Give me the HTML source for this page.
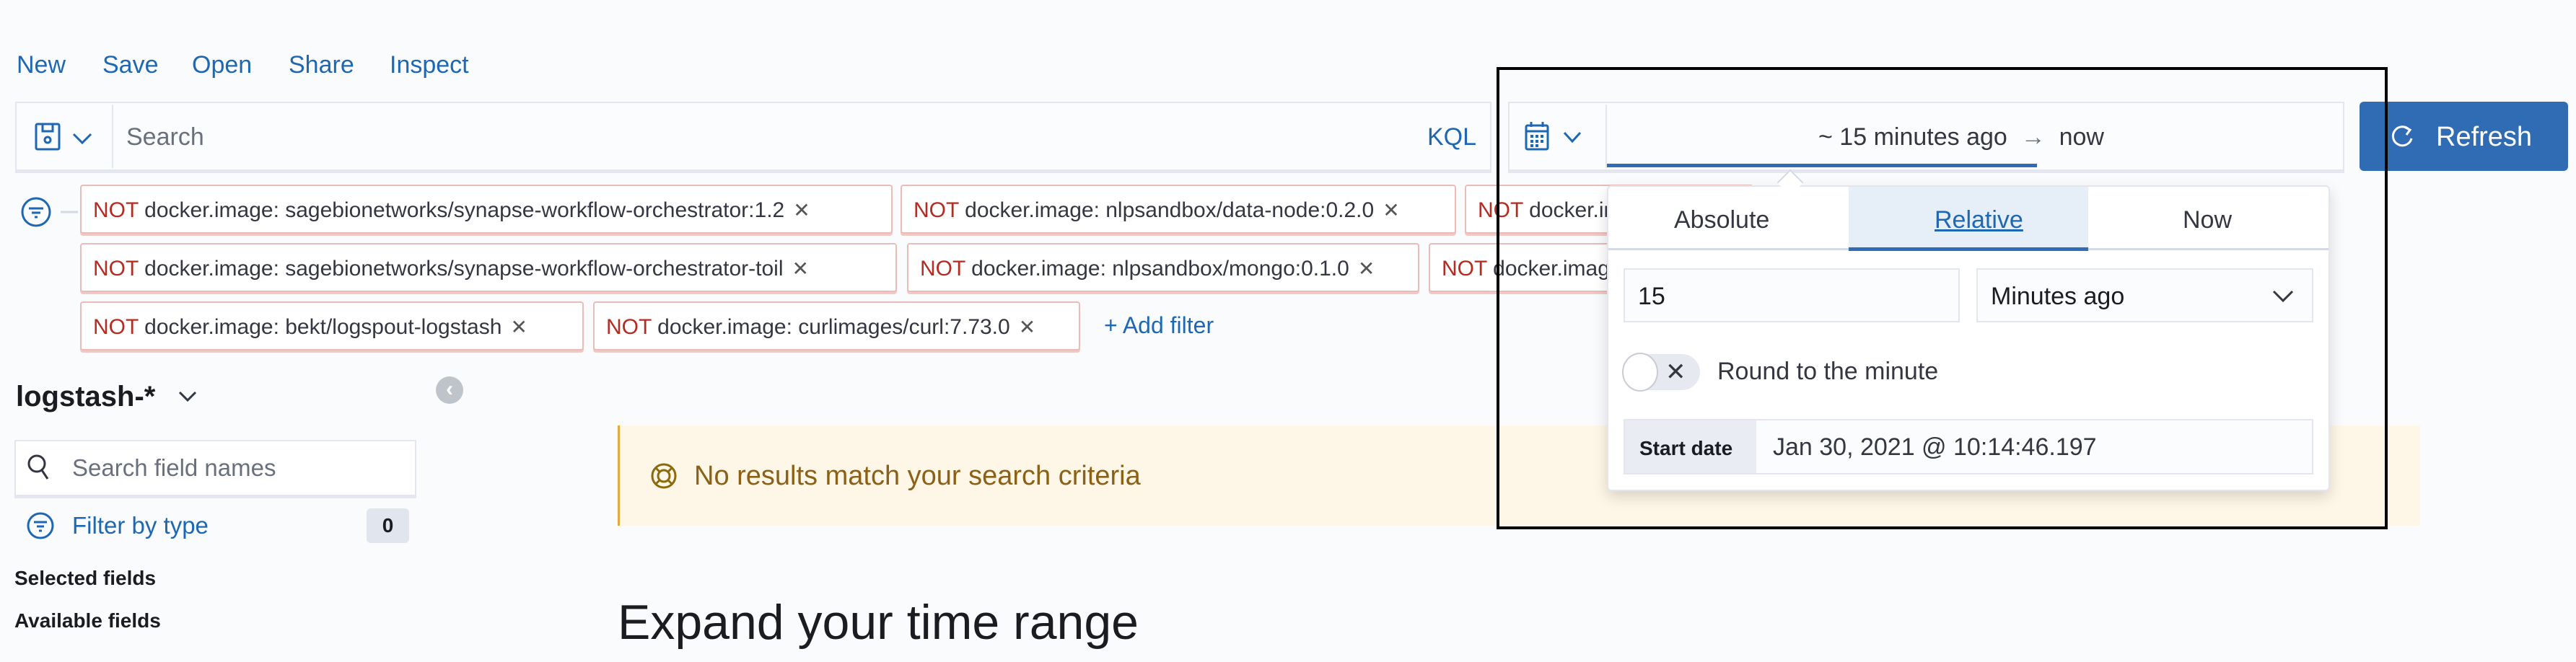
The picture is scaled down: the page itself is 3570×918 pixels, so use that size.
<!DOCTYPE html>
<html><head><meta charset="utf-8"><style>
*{box-sizing:border-box;margin:0;padding:0}
body{width:3570px;height:918px;background:#fafbfd;font-family:"Liberation Sans",Arial,sans-serif;position:relative;overflow:hidden;color:#343741}
.a{position:absolute}
.menu{top:71px;font-size:34px;color:#1e67b3}
.box{background:#fbfcfd;border:2px solid #e3e6ee;box-shadow:0 3px 0 #e4e7ef}
.pill{position:absolute;height:68px;border:2px solid #ebbcb7;background:#fff;border-radius:4px;font-size:30px;line-height:68px;padding-left:16px;color:#343741;white-space:nowrap;overflow:hidden;box-shadow:0 3px 0 #eec9c5}
.pill b{font-weight:normal;color:#b52b20}
.pill i{font-style:normal;color:#555;margin-left:12px;font-size:28px}
</style></head><body>
<div class="a menu" style="left:23px">New</div>
<div class="a menu" style="left:142px">Save</div>
<div class="a menu" style="left:266px">Open</div>
<div class="a menu" style="left:400px">Share</div>
<div class="a menu" style="left:540px">Inspect</div>

<div class="a box" style="left:21px;top:141px;width:2046px;height:96px"></div>
<div class="a" style="left:155px;top:145px;width:2px;height:88px;background:#e3e6ee"></div>
<svg class="a" style="left:48px;top:170px" width="90" height="40" viewBox="0 0 90 40"><rect x="2" y="2" width="32" height="35" rx="2" fill="none" stroke="#1e67b3" stroke-width="3"/><rect x="11" y="2" width="14" height="10" fill="none" stroke="#1e67b3" stroke-width="3"/><circle cx="18" cy="24" r="4" fill="none" stroke="#1e67b3" stroke-width="3"/><path d="M54 16 L66 28 L78 16" fill="none" stroke="#1e67b3" stroke-width="3"/></svg>
<div class="a" style="left:175px;top:171px;font-size:34px;color:#69707d">Search</div>
<div class="a" style="left:1978px;top:171px;font-size:34px;color:#1e67b3">KQL</div>

<div class="a box" style="left:2090px;top:141px;width:1159px;height:96px"></div>
<div class="a" style="left:2225px;top:145px;width:2px;height:88px;background:#e3e6ee"></div>
<svg class="a" style="left:2112px;top:168px" width="90" height="42" viewBox="0 0 90 42"><rect x="3" y="6" width="30" height="33" rx="2" fill="none" stroke="#1e67b3" stroke-width="3"/><line x1="3" y1="14" x2="33" y2="14" stroke="#1e67b3" stroke-width="3"/><line x1="10" y1="1" x2="10" y2="8" stroke="#1e67b3" stroke-width="3"/><line x1="26" y1="1" x2="26" y2="8" stroke="#1e67b3" stroke-width="3"/><g fill="#1e67b3"><rect x="9" y="19" width="4" height="4"/><rect x="16" y="19" width="4" height="4"/><rect x="23" y="19" width="4" height="4"/><rect x="9" y="26" width="4" height="4"/><rect x="16" y="26" width="4" height="4"/><rect x="23" y="26" width="4" height="4"/><rect x="9" y="32" width="4" height="4"/><rect x="16" y="32" width="4" height="4"/></g><path d="M56 16 L67 28 L78 16" fill="none" stroke="#1e67b3" stroke-width="3"/></svg>
<div class="a" style="left:2520px;top:171px;font-size:34px;color:#343741">~ 15 minutes ago &nbsp;<span style="color:#69707d">→</span>&nbsp; now</div>
<div class="a" style="left:2227px;top:227px;width:596px;height:5px;background:#2f6cb3"></div>

<div class="a" style="left:3270px;top:141px;width:289px;height:96px;background:#2f6cb3;border-radius:6px;color:#fff;font-size:38px;line-height:98px;padding-left:106px">Refresh</div>
<svg class="a" style="left:3312px;top:172px" width="34" height="36" viewBox="0 0 34 36"><path d="M27 8 A13 13 0 1 0 30 20" fill="none" stroke="#fff" stroke-width="3"/><path d="M20 4 L28 8 L23 15" fill="none" stroke="#fff" stroke-width="3"/></svg>

<svg class="a" style="left:28px;top:272px" width="80" height="44" viewBox="0 0 80 44"><circle cx="22" cy="22" r="19" fill="none" stroke="#1e67b3" stroke-width="3"/><line x1="12" y1="17" x2="32" y2="17" stroke="#1e67b3" stroke-width="3"/><line x1="16" y1="23" x2="28" y2="23" stroke="#1e67b3" stroke-width="3"/><line x1="20" y1="29" x2="24" y2="29" stroke="#1e67b3" stroke-width="3"/><line x1="56" y1="22" x2="80" y2="22" stroke="#d3dae6" stroke-width="3"/></svg>

<div class="pill" style="left:111px;top:256px;width:1126px">
<b>NOT</b> docker.image: sagebionetworks/synapse-workflow-orchestrator:1.2<i>✕</i></div>
<div class="pill" style="left:1248px;top:256px;width:770px"><b>NOT</b> docker.image: nlpsandbox/data-node:0.2.0<i>✕</i></div>
<div class="pill" style="left:2030px;top:256px;width:400px"><b>NOT</b> docker.image</div>
<div class="pill" style="left:111px;top:337px;width:1132px"><b>NOT</b> docker.image: sagebionetworks/synapse-workflow-orchestrator-toil<i>✕</i></div>
<div class="pill" style="left:1257px;top:337px;width:710px"><b>NOT</b> docker.image: nlpsandbox/mongo:0.1.0<i>✕</i></div>
<div class="pill" style="left:1980px;top:337px;width:400px"><b>NOT</b> docker.image</div>
<div class="pill" style="left:111px;top:418px;width:698px"><b>NOT</b> docker.image: bekt/logspout-logstash<i>✕</i></div>
<div class="pill" style="left:822px;top:418px;width:675px"><b>NOT</b> docker.image: curlimages/curl:7.73.0<i>✕</i></div>
<div class="a" style="left:1530px;top:433px;font-size:32px;color:#1e67b3">+ Add filter</div>

<div class="a" style="left:22px;top:528px;font-size:40px;font-weight:bold;color:#1a1c21">logstash-*</div>
<svg class="a" style="left:246px;top:540px" width="28" height="20" viewBox="0 0 28 20"><path d="M3 4 L14 15 L25 4" fill="none" stroke="#343741" stroke-width="3"/></svg>
<div class="a" style="left:604px;top:522px;width:38px;height:38px;border-radius:50%;background:#bfc3ca;color:#fff;font-size:30px;line-height:36px;text-align:center;font-weight:bold">‹</div>

<div class="a" style="left:20px;top:610px;width:557px;height:78px;background:#fff;border:2px solid #e3e6ee;box-shadow:0 3px 0 #e4e7ef"></div>
<svg class="a" style="left:36px;top:628px" width="34" height="40" viewBox="0 0 34 40"><circle cx="15" cy="15" r="11" fill="none" stroke="#343741" stroke-width="3"/><line x1="22" y1="24" x2="30" y2="36" stroke="#343741" stroke-width="3"/></svg>
<div class="a" style="left:100px;top:630px;font-size:33px;color:#69707d">Search field names</div>
<svg class="a" style="left:36px;top:708px" width="40" height="42" viewBox="0 0 40 42"><circle cx="20" cy="21" r="17" fill="none" stroke="#1e67b3" stroke-width="3"/><line x1="11" y1="16" x2="29" y2="16" stroke="#1e67b3" stroke-width="3"/><line x1="15" y1="22" x2="25" y2="22" stroke="#1e67b3" stroke-width="3"/><line x1="18" y1="28" x2="22" y2="28" stroke="#1e67b3" stroke-width="3"/></svg>
<div class="a" style="left:100px;top:710px;font-size:33px;color:#1e67b3">Filter by type</div>
<div class="a" style="left:508px;top:705px;width:59px;height:48px;border-radius:6px;background:#e0e5ee;font-size:28px;font-weight:bold;text-align:center;line-height:48px;color:#1a1c21">0</div>
<div class="a" style="left:20px;top:786px;font-size:28px;font-weight:bold;color:#1a1c21">Selected fields</div>
<div class="a" style="left:20px;top:845px;font-size:28px;font-weight:bold;color:#1a1c21">Available fields</div>

<div class="a" style="left:856px;top:590px;width:2498px;height:139px;background:#fef6e6;border-left:3px solid #e3a93f"></div>
<svg class="a" style="left:900px;top:640px" width="40" height="40" viewBox="0 0 40 40"><circle cx="20" cy="20" r="16" fill="none" stroke="#8a6a0a" stroke-width="3"/><circle cx="20" cy="20" r="8" fill="none" stroke="#8a6a0a" stroke-width="3"/><path d="M9 9 L14 14 M31 9 L26 14 M9 31 L14 26 M31 31 L26 26" stroke="#8a6a0a" stroke-width="3"/></svg>
<div class="a" style="left:962px;top:639px;font-size:38px;color:#8a6116">No results match your search criteria</div>
<div class="a" style="left:856px;top:824px;font-size:68px;color:#1a1c21">Expand your time range</div>

<!-- popover -->
<div class="a" style="left:2227px;top:257px;width:1002px;height:424px;background:#fff;border:2px solid #e3e6ee;border-radius:6px;box-shadow:0 8px 20px rgba(0,0,0,.15)"></div>
<div class="a" style="left:2468px;top:240px;width:26px;height:26px;background:#fff;border-left:2px solid #d3dae6;border-top:2px solid #d3dae6;transform:rotate(45deg)"></div>
<div class="a" style="left:2229px;top:344px;width:998px;height:3px;background:#d3dae6"></div>
<div class="a" style="left:2562px;top:259px;width:332px;height:89px;background:#e6eef8;border-bottom:5px solid #2f6cb3"></div>
<div class="a" style="left:2320px;top:286px;font-size:34px;color:#343741">Absolute</div>
<div class="a" style="left:2681px;top:286px;font-size:34px;color:#1e67b3;text-decoration:underline">Relative</div>
<div class="a" style="left:3025px;top:286px;font-size:34px;color:#343741">Now</div>
<div class="a" style="left:2250px;top:372px;width:466px;height:75px;background:#fbfcfd;border:2px solid #e3e6ee;font-size:34px;line-height:75px;padding-left:18px;color:#1a1c21">15</div>
<div class="a" style="left:2739px;top:372px;width:467px;height:75px;background:#fbfcfd;border:2px solid #e3e6ee;font-size:34px;line-height:75px;padding-left:18px;color:#1a1c21">Minutes ago</div>
<svg class="a" style="left:3148px;top:400px" width="32" height="22" viewBox="0 0 32 22"><path d="M3 4 L16 17 L29 4" fill="none" stroke="#343741" stroke-width="3"/></svg>
<div class="a" style="left:2250px;top:491px;width:106px;height:50px;border-radius:25px;background:#e6e9ef"></div>
<div class="a" style="left:2248px;top:489px;width:50px;height:54px;border-radius:50%;background:#fff;border:2px solid #c8ccd4"></div>
<div class="a" style="left:2308px;top:496px;font-size:34px;color:#343741">✕</div>
<div class="a" style="left:2380px;top:496px;font-size:34px;color:#343741">Round to the minute</div>
<div class="a" style="left:2250px;top:581px;width:956px;height:77px;background:#fbfcfd;border:2px solid #e3e6ee"></div>
<div class="a" style="left:2252px;top:583px;width:182px;height:73px;background:#e9edf3;font-size:28px;font-weight:bold;line-height:77px;padding-left:20px;color:#1a1c21">Start date</div>
<div class="a" style="left:2457px;top:601px;font-size:34px;color:#343741">Jan 30, 2021 @ 10:14:46.197</div>

<div class="a" style="left:2074px;top:93px;width:1235px;height:641px;border:4px solid #000"></div>
</body></html>
